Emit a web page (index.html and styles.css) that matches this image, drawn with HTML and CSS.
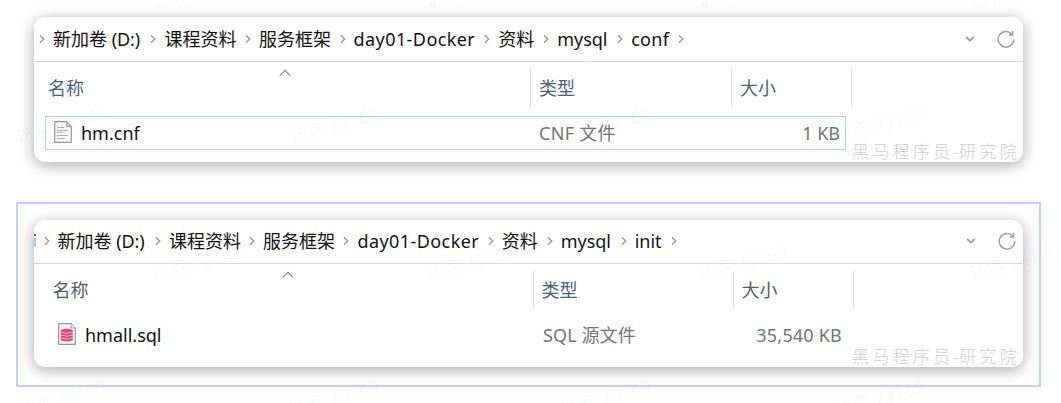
FILE: index.html
```html
<!DOCTYPE html>
<html lang="zh-CN">
<head>
<meta charset="utf-8">
<title>mysql</title>
<link rel="stylesheet" href="styles.css">
</head>
<body>
<svg class="defs" width="0" height="0">
  <symbol id="chev" viewBox="0 0 6 10"><path d="M1 1.3 L4.7 5 L1 8.7" fill="none" stroke="#999" stroke-width="1.4"/></symbol>
  <symbol id="down" viewBox="0 0 10 8"><path d="M1.2 2 L5 5.6 L8.8 2" fill="none" stroke="#999" stroke-width="1.8"/></symbol>
  <symbol id="sort" viewBox="0 0 12 8"><path d="M.8 6.6 L6 1.4 L11.2 6.6" fill="none" stroke="#888" stroke-width="1.2"/></symbol>
  <symbol id="reload" viewBox="0 0 18 18"><path d="M14.9 4.2 A7.8 7.8 0 1 0 16.8 9.3" fill="none" stroke="#a0a0a0" stroke-width="1.5"/><path d="M12 4.9 H15.6 V1.1" fill="none" stroke="#a0a0a0" stroke-width="1.7"/></symbol>
</svg>
<main class="page">
  <section class="card card-conf">
    <nav class="bar">
      <span class="crumb w-drive"><svg class="chev"><use href="#chev"/></svg><b>新加卷 <i class="paren">(D:)</i></b></span>
      <span class="crumb w-course"><svg class="chev"><use href="#chev"/></svg><b>课程资料</b></span>
      <span class="crumb w-frame"><svg class="chev"><use href="#chev"/></svg><b>服务框架</b></span>
      <span class="crumb w-day"><svg class="chev"><use href="#chev"/></svg><b class="day">day01-Docker</b></span>
      <span class="crumb w-res"><svg class="chev"><use href="#chev"/></svg><b>资料</b></span>
      <span class="crumb w-mysql"><svg class="chev"><use href="#chev"/></svg><b>mysql</b></span>
      <span class="crumb w-conf"><svg class="chev"><use href="#chev"/></svg><b class="conf">conf</b></span>
      <svg class="chev"><use href="#chev"/></svg>
      <svg class="down"><use href="#down"/></svg>
      <svg class="reload"><use href="#reload"/></svg>
    </nav>
    <div class="heads">
      <div class="head name">名称<svg class="sort"><use href="#sort"/></svg></div>
      <div class="head type">类型</div>
      <div class="head size">大小</div>
    </div>
    <div class="row selected">
      <svg class="file" viewBox="0 0 18 22"><path d="M.7 .7 H12.5 L17.3 5.5 V21.3 H.7 Z" fill="#f7f7f7" stroke="#979797" stroke-width="1.2"/><path d="M12.5 .7 V5.5 H17.3 Z" fill="#ccc" stroke="#999" stroke-width=".8"/><path d="M3 6.5 H10 M3 9.5 H14 M3 11.5 H9 M3 14.5 H14 M3 17.5 H11.5" stroke="#b0b0b0" stroke-width="1"/></svg>
      <span class="fname">hm.cnf</span>
      <span class="ftype">CNF 文件</span>
      <span class="fsize">1 KB</span>
    </div>
    <div class="brand">黑马程序员<i class="dash">-</i>研究院</div>
  </section>
  <div class="frame">
    <section class="card card-init">
      <nav class="bar">
        <span class="sliver"></span>
        <span class="crumb w-drive"><svg class="chev"><use href="#chev"/></svg><b>新加卷 <i class="paren">(D:)</i></b></span>
        <span class="crumb w-course"><svg class="chev"><use href="#chev"/></svg><b>课程资料</b></span>
        <span class="crumb w-frame"><svg class="chev"><use href="#chev"/></svg><b>服务框架</b></span>
        <span class="crumb w-day"><svg class="chev"><use href="#chev"/></svg><b class="day">day01-Docker</b></span>
        <span class="crumb w-res"><svg class="chev"><use href="#chev"/></svg><b>资料</b></span>
        <span class="crumb w-mysql"><svg class="chev"><use href="#chev"/></svg><b>mysql</b></span>
        <span class="crumb w-init"><svg class="chev"><use href="#chev"/></svg><b>init</b></span>
        <svg class="chev"><use href="#chev"/></svg>
        <svg class="down"><use href="#down"/></svg>
        <svg class="reload"><use href="#reload"/></svg>
      </nav>
      <div class="heads">
        <div class="head name">名称<svg class="sort"><use href="#sort"/></svg></div>
        <div class="head type">类型</div>
        <div class="head size">大小</div>
      </div>
      <div class="row">
        <svg class="file" viewBox="0 0 18 22"><path d="M.7 .7 H13 L17.3 5 V21.3 H.7 Z" fill="#f8f8f8" stroke="#979797" stroke-width="1.2"/><path d="M13 .7 V5 H17.3" fill="#fff" stroke="#979797"/><path d="M2.8 7 Q9 4.6 14.8 7 V17.2 Q9 19.8 2.8 17.2 Z" fill="#e0457b"/><path d="M2.8 9.2 Q9 11.6 14.8 9.2 M2.8 12 Q9 14.4 14.8 12 M2.8 14.8 Q9 17.2 14.8 14.8" fill="none" stroke="#f8c3d4" stroke-width=".9"/></svg>
        <span class="fname">hmall.sql</span>
        <span class="ftype">SQL 源文件</span>
        <span class="fsize">35,540 KB</span>
      </div>
      <div class="brand">黑马程序员<i class="dash">-</i>研究院</div>
    </section>
  </div>
</main>
<div class="marks">
  <div class="mrow odd"><span>访客 73169</span><span>访客 73169</span><span>访客 73169</span><span>访客 73169</span></div>
  <div class="mrow"><span>访客 73169</span><span>访客 73169</span><span>访客 73169</span><span>访客 73169</span></div>
  <div class="mrow odd"><span>访客 73169</span><span>访客 73169</span><span>访客 73169</span><span>访客 73169</span></div>
  <div class="mrow"><span>访客 73169</span><span>访客 73169</span><span>访客 73169</span><span>访客 73169</span></div>
</div>
</body>
</html>
```
FILE: styles.css
```css
* { box-sizing: border-box; }
html, body { margin: 0; height: 403px; overflow: hidden; background: #fff; }
body { position: relative; font: 18px/24px "Noto Sans", "Noto Sans CJK SC", sans-serif; color: #111; }
.defs { position: absolute; }
b { font-weight: 400; }
i { font-style: normal; }
.page { padding: 17px 20px 0 16px; display: flex; flex-direction: column; gap: 40px; }
.card { width: 989px; border-radius: 11px; background: #fff; box-shadow: 0 3px 16px rgba(0,0,0,.34); overflow: hidden; position: relative; }
.card-conf { margin-left: 18px; height: 145px; }
.frame { width: 1025px; height: 185px; border: 2px solid #c0d0fd; padding: 16px; }
.card-init { height: 147px; }
.bar { display: flex; align-items: center; height: 45px; border-bottom: 1px solid #d9d9d9; padding-left: 5px; white-space: nowrap; }
.card-init .bar { height: 44px; padding: 0 0 2px; }
.sliver { width: 2px; height: 13px; margin-right: 7.5px; background: linear-gradient(#2d6fb8 0 2px, #fff 2px 4px, #8fd3f8 4px); }
.crumb { display: flex; align-items: center; gap: 8px; flex: none; }
.chev { width: 6px; height: 10px; flex: none; }
.w-drive { width: 111.4px; }
.w-course { width: 94.6px; }
.card-init .w-course { width: 94.2px; }
.w-frame { width: 94.6px; }
.card-init .w-frame { width: 94.4px; }
.w-day { width: 144.6px; }
.card-init .w-day { width: 144.2px; }
.w-res { width: 59px; }
.w-mysql { width: 74px; }
.w-conf { width: 61px; }
.w-init { width: 50px; }
.day { letter-spacing: .42px; }
.conf { letter-spacing: .3px; }
.paren { letter-spacing: -.1px; }
.down { width: 10px; height: 8px; margin-left: auto; margin-right: 22.5px; }
.reload { width: 18px; height: 18px; margin-right: 8px; }
.card-init .reload { margin-right: 7px; }
.heads { display: flex; height: 45px; padding: 6px 0 0 14px; color: #4c607a; }
.card-init .heads { padding-left: 18.5px; }
.head { height: 39px; padding-top: 8px; border-right: 1px solid #e5e5e5; display: flex; }
.name { width: 483px; justify-content: space-between; }
.card-init .name { width: 481px; }
.type { width: 201px; padding-left: 8px; }
.card-init .type { width: 200px; }
.size { width: 120px; padding-left: 8px; }
.sort { width: 12px; height: 8px; margin: -7px 239px 0 0; }
.row { display: flex; align-items: center; height: 34px; margin-left: 11px; width: 801px; border: 1px solid transparent; }
.selected { border-color: #a9d5fa; margin-top: 9px; }
.card-init .row { margin: 9px 0 0 15px; width: 799px; }
.file { width: 18px; height: 22px; margin: -3px 9px 0 8px; flex: none; }
.fname { width: 458px; }
.ftype { color: #737373; letter-spacing: .3px; }
.card-init .ftype { letter-spacing: .1px; }
.fsize { color: #737373; margin-left: auto; padding-right: 5px; }
.card-init .fsize { letter-spacing: .2px; }
.brand { position: absolute; right: 3px; bottom: -2px; font: 300 17px/26px "Noto Sans CJK SC", sans-serif; letter-spacing: 3.3px; color: #cfcfcf; white-space: nowrap; }
.dash { letter-spacing: 0; }
.marks { position: absolute; left: 0; top: 0; width: 1061px; height: 403px; overflow: hidden; pointer-events: none; }
.mrow { display: flex; height: 136.5px; align-items: center; padding-left: 11px; }
.mrow:first-child { margin-top: -79.5px; }
.odd { padding-left: 147px; }
.mrow span { flex: none; width: 100px; margin-right: 172.5px; text-align: center; font-size: 18px; color: rgba(0,0,0,.038); transform: rotate(-15deg); white-space: nowrap; }
```
